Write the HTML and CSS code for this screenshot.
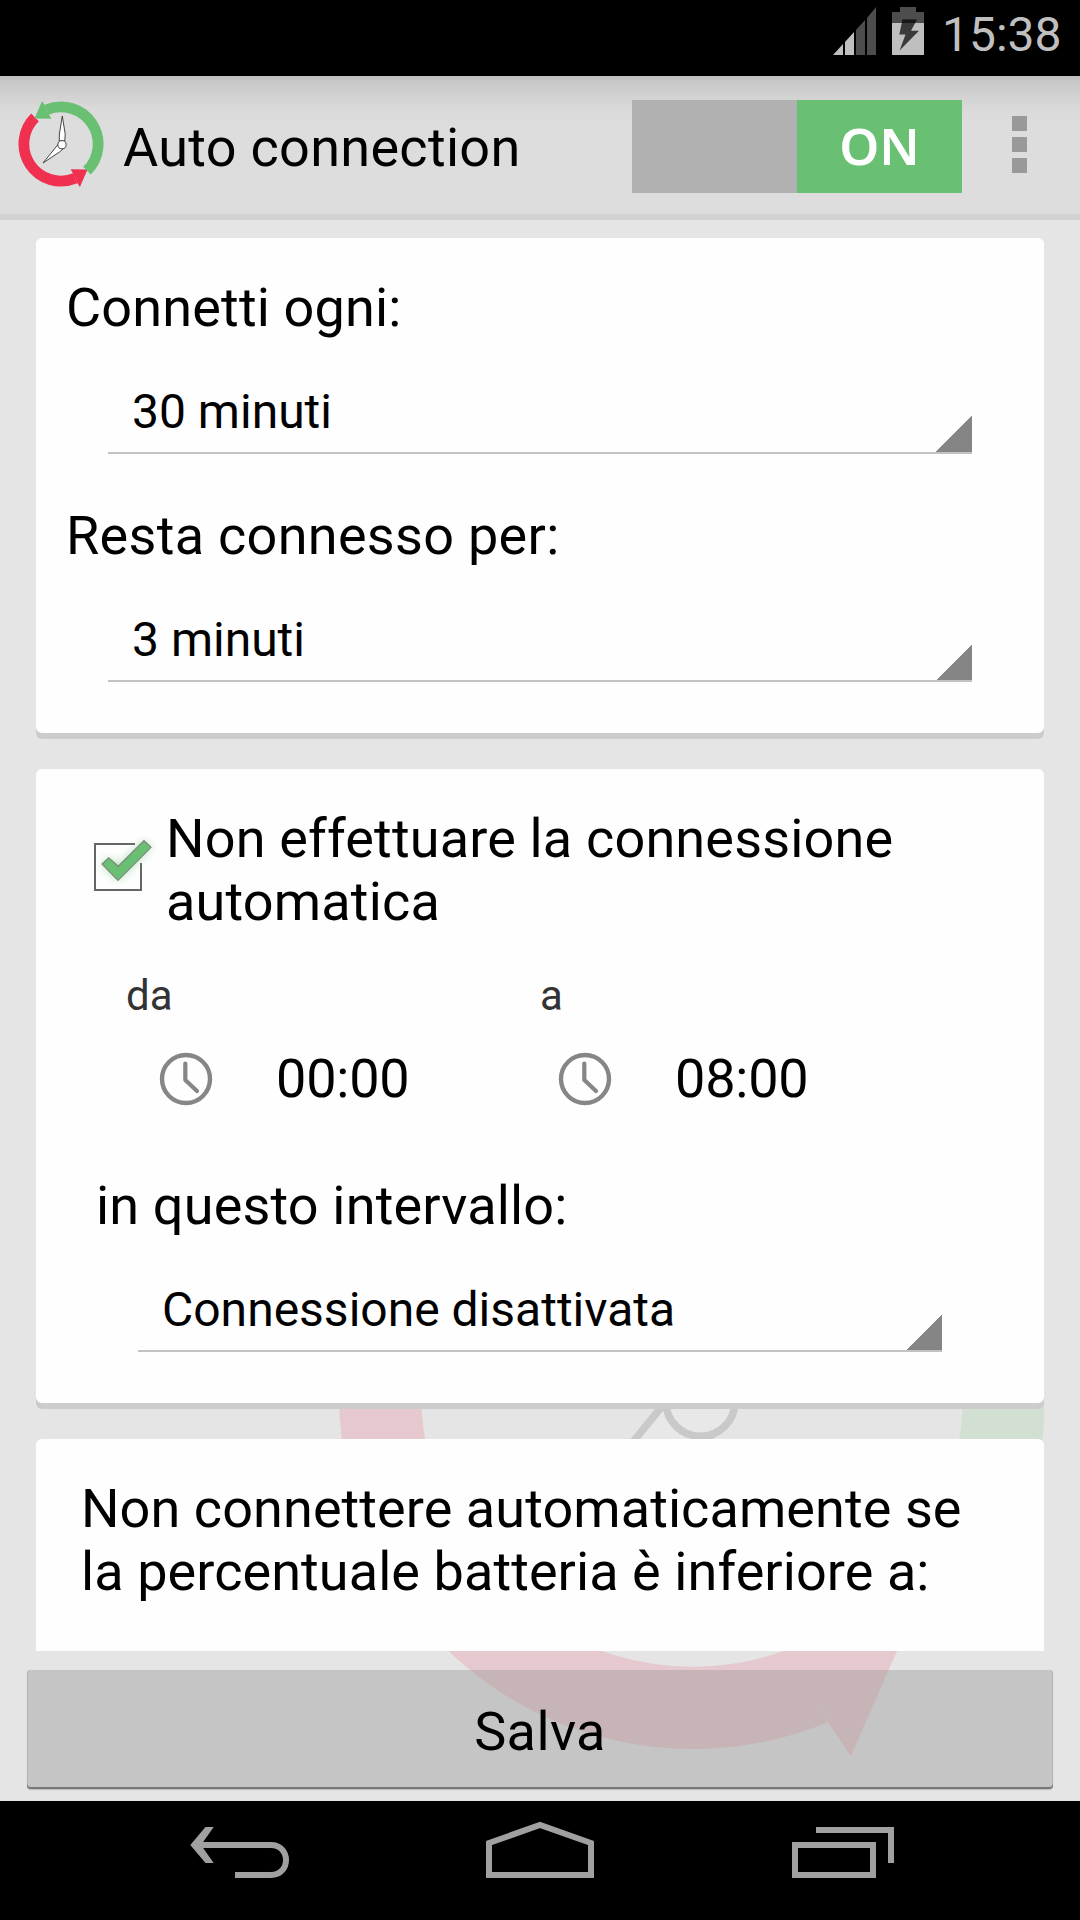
FILE: index.html
```html
<!DOCTYPE html>
<html lang="it">
<head>
<meta charset="utf-8">
<title>Auto connection</title>
<link rel="stylesheet" href="styles.css">
</head>
<body>
<svg class="defs" width="0" height="0">
  <defs>
    <g id="half">
      <path class="ring" d="M-26 -26.6A37.2 37.2 0 0 0 14.3 34.3" fill="none" stroke="currentColor"/>
      <path d="M9.6 25.2L26.5 25.6L18.9 42.9L16.25 38.9L12.2 29.8Z" fill="currentColor"/>
    </g>
    <symbol id="logo" viewBox="-45 -45 90 90">
      <use href="#half" class="red"/>
      <use href="#half" class="green" transform="rotate(180)"/>
      <g fill="#fff" stroke="#333" stroke-width="0.9" stroke-linejoin="round">
        <path d="M1.3 -28L-1.6 -10L-1.8 -3L3.8 -3L4.2 -10Z"/>
        <path d="M-18 19L-3.8 1.5L-1 -2L2.5 4.500L-1.500 8Z"/>
        <circle cx="1" cy="0.7" r="4.1"/>
      </g>
    </symbol>
    <symbol id="clock" viewBox="0 0 54 54">
      <circle cx="27" cy="27" r="24" fill="none" stroke="#868686" stroke-width="4.4"/>
      <path d="M26.3 11.500L26.3 28L38 39" fill="none" stroke="#868686" stroke-width="4.2" stroke-linecap="round" stroke-linejoin="round"/>
    </symbol>
  </defs>
</svg>

<div class="status">
  <svg class="signal" width="44" height="48" viewBox="0 0 44 48">
    <path d="M0 48L10 37V48ZM12 35L21 25V48H12Z" fill="#bfbfbf"/>
    <path d="M23 23L32 13V48H23ZM34 11L43 0V48H34Z" fill="#4d4d4d"/>
  </svg>
  <svg class="battery" width="32" height="48" viewBox="0 0 32 48">
    <path d="M8 0H24V5H32V16H0V5H8Z" fill="#4d4d4d"/>
    <path d="M0 16H32V48H0Z" fill="#bfbfbf"/>
    <path d="M10.500 12.500H25L19 23.800H27L7.600 43.500L13.500 27.500H7.300Z" fill="#3a3a3a"/>
    <path d="M10.500 12.500H25L23 16H9.700Z" fill="#171717"/>
  </svg>
  <span class="time">15:38</span>
</div>

<header class="bar">
  <svg class="logo" width="90" height="90"><use href="#logo"/></svg>
  <h1 class="title">Auto connection</h1>
  <div class="switch"><div class="thumb">ON</div></div>
  <div class="menu"><i></i><i></i><i></i></div>
</header>

<main class="content">
  <svg class="watermark" width="756" height="756"><use href="#logo"/></svg>
  <div class="scroll">
    <section class="card">
      <p class="label connect">Connetti ogni:</p>
      <div class="spinner"><span>30 minuti</span></div>
      <p class="label stay">Resta connesso per:</p>
      <div class="spinner"><span>3 minuti</span></div>
    </section>
    <section class="card inset">
      <div class="check">
        <svg class="box" width="72" height="72" viewBox="0 0 72 72">
          <defs><filter id="glow" x="-50%" y="-50%" width="200%" height="200%"><feGaussianBlur stdDeviation="5"/></filter></defs>
          <path d="M51 14H11V60H57V33" fill="none" stroke="#666" stroke-width="2"/>
          <path d="M18 34L24.700 27.700L34.300 36.300L60 10.700L67 17.300L34 50.300Z" fill="#69c072" opacity=".55" filter="url(#glow)"/>
          <path d="M18 34L24.700 27.700L34.300 36.300L60 10.700L67 17.300L34 50.300Z" fill="#69c072" stroke="#7d8a7e" stroke-width="1.200"/>
        </svg>
        <p class="label">Non effettuare la connessione<br>automatica</p>
      </div>
      <div class="range">
        <div class="slot">
          <p class="caption">da</p>
          <div class="pick"><svg width="54" height="54"><use href="#clock"/></svg><span>00:00</span></div>
        </div>
        <div class="slot to">
          <p class="caption">a</p>
          <div class="pick"><svg width="54" height="54"><use href="#clock"/></svg><span>08:00</span></div>
        </div>
      </div>
      <p class="label interval">in questo intervallo:</p>
      <div class="spinner"><span>Connessione disattivata</span></div>
    </section>
    <section class="card last">
      <p class="label">Non connettere automaticamente se<br>la percentuale batteria è inferiore a:</p>
    </section>
  </div>
  <button class="save">Salva</button>
</main>

<nav class="nav">
  <svg width="1080" height="119" viewBox="0 1801 1080 119" fill="none" stroke="#a0a0a0" stroke-width="6">
    <path d="M196 1845H271C291 1845 291 1875 271 1875H235"/>
    <path d="M205.500 1827H213.700L201 1845L213.700 1863H205.500L190.300 1845Z" fill="#a0a0a0" stroke="none"/>
    <path d="M489 1843L540 1825L591 1843V1875H489Z"/>
    <path d="M795 1845H873V1875H795ZM816 1830H891V1863"/>
  </svg>
</nav>
</body>
</html>
```
FILE: styles.css
```css
* { box-sizing: border-box; }
body {
  margin: 0;
  width: 1080px;
  height: 1920px;
  overflow: hidden;
  display: flex;
  flex-direction: column;
  background: #e5e5e5;
  color: #000;
  font-family: Roboto, sans-serif;
  font-size: 54px;
  line-height: 63px;
}
p, h1 { margin: 0; font-weight: 400; font-size: inherit; }
svg { display: block; flex: none; }
.defs { position: absolute; }
.red { color: #f0304f; }
.green { color: #69c072; }
.ring { stroke-width: var(--ring, 9.8px); }

.status {
  height: 76px;
  background: #000;
  display: flex;
  justify-content: flex-end;
  padding: 7px 18px 0 0;
}
.battery { margin-left: 15px; }
.time {
  margin-left: 18px;
  width: 120px;
  font-size: 48px;
  line-height: 55px;
  color: #bfbfbf;
  white-space: nowrap;
}

.bar {
  height: 144px;
  border-bottom: 6px solid #d2d2d2;
  background: linear-gradient(#bdbdbd, #c8c8c8 6px, #d2d2d2 20px, #dadada 34px, #ddd 48px);
  display: flex;
  padding-left: 16px;
}
.logo { margin-top: 23px; --ring: 10.8px; }
.title { margin: 40px 0 0 17px; width: 509px; white-space: nowrap; letter-spacing: .3px; }
.switch {
  margin-top: 24px;
  width: 330px;
  height: 93px;
  background: #b1b1b1;
  display: flex;
  justify-content: flex-end;
}
.thumb {
  width: 165px;
  background: #69c072;
  color: #fff;
  font: 600 51px/91px "Noto Sans", sans-serif;
  text-align: center;
}
.menu {
  margin: 40px 0 0 50px;
  display: flex;
  flex-direction: column;
  gap: 6px;
}
.menu i { width: 15px; height: 15px; background: #999; }

.content {
  position: relative;
  height: 1581px;
  overflow: hidden;
}
.watermark {
  position: absolute;
  left: 314px;
  top: 798px;
  opacity: .15;
  clip-path: inset(0 26px 0 0);
}
.scroll {
  position: relative;
  height: 1431px;
  padding: 18px 36px 0;
  overflow: hidden;
  display: flex;
  flex-direction: column;
  gap: 36px;
}
.card {
  flex: none;
  background: #fefefe;
  border-radius: 6px;
  box-shadow: 0 6px 0 #ccc;
  padding: 38px 30px 51px;
}
.card.inset { padding-left: 60px; padding-right: 60px; }
.card.last { padding: 38px 45px 120px; }
.label { white-space: nowrap; letter-spacing: .17px; }
.last .label { letter-spacing: .08px; }
.stay { margin-top: 50px; letter-spacing: .3px; }
.spinner {
  margin: 0 42px;
  height: 115px;
  padding: 45px 0 0 24px;
  font-size: 48px;
  line-height: 56px;
  border-bottom: 2px solid #c2c2c2;
  background: linear-gradient(135deg, transparent 50%, #858585 50%) right bottom / 36px 36px no-repeat;
}
.check { display: flex; margin-left: -12px; }
.box { margin: 23px 10px 0 0; }
.range { display: flex; margin-top: 38px; }
.slot { width: 414px; padding-left: 30px; }
.slot.to { width: auto; }
.caption { font-size: 42px; line-height: 50px; color: #333; }
.pick { margin-top: 26px; display: flex; padding-left: 33px; letter-spacing: -.2px; }
.pick svg { margin-top: 5px; }
.pick span { margin-left: 63px; }
.to .pick { padding-left: 18px; }
.interval { margin-top: 64px; }

.save {
  position: relative;
  display: block;
  margin: 19px 27px 0;
  width: 1026px;
  height: 119px;
  padding: 3px 0 0;
  border: 0;
  border-radius: 4px;
  background: rgba(145, 145, 145, .37);
  box-shadow: inset 0 -2px 0 #777, inset 1px 0 0 #b4b4b4, inset -1px 0 0 #b4b4b4, 0 1px 1px #bbb;
  font: 400 54px/63px Roboto, sans-serif;
  letter-spacing: .4px;
  color: #000;
}
.nav { height: 119px; background: #000; }
```
